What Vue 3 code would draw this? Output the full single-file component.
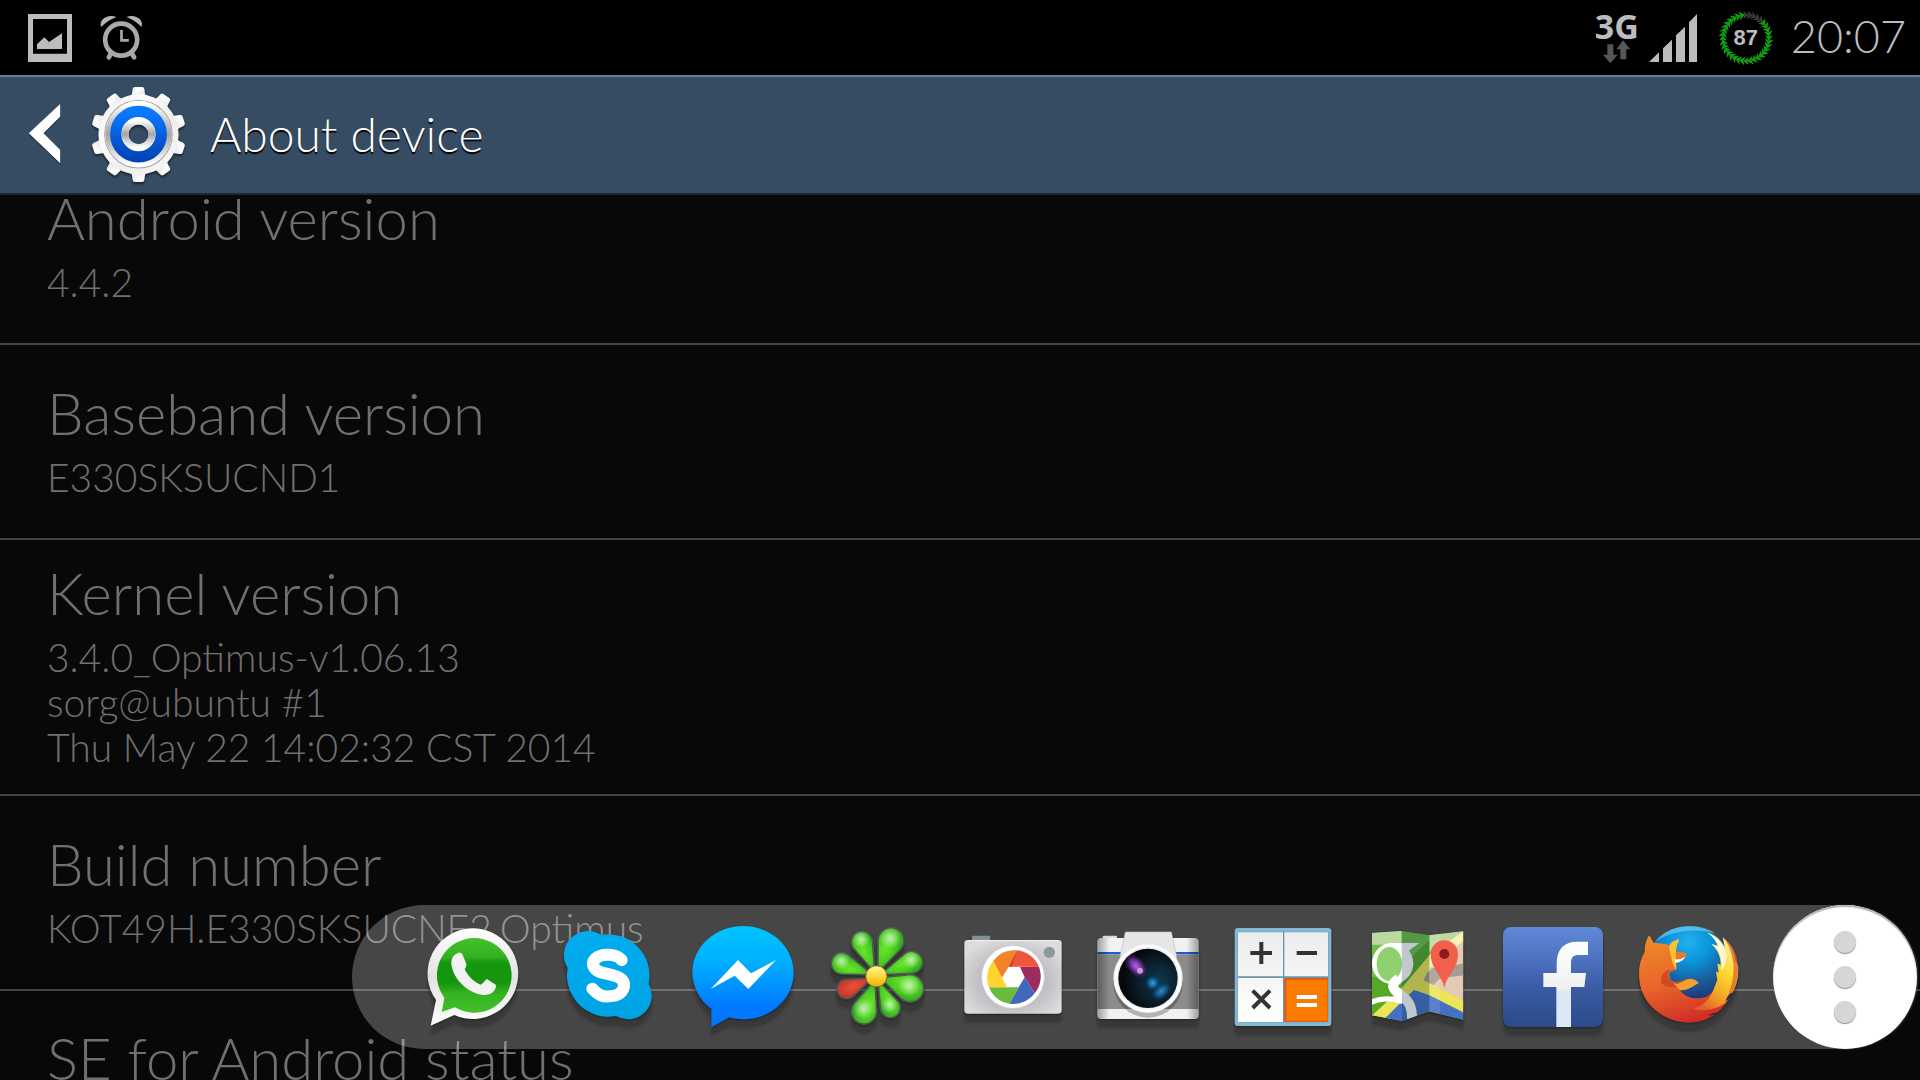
<script setup>
const rows = [
  { title: 'Android version', lines: ['4.4.2'] },
  { title: 'Baseband version', lines: ['E330SKSUCND1'] },
  { title: 'Kernel version', lines: ['3.4.0_Optimus-v1.06.13', 'sorg@ubuntu #1', 'Thu May 22 14:02:32 CST 2014'] },
  { title: 'Build number', lines: ['KOT49H.E330SKSUCNE2.Optimus'] },
  { title: 'SE for Android status', lines: [] },
]

// Flower petals: round end centre and radius, all pointing at the flower's heart
const heart = { x: 619, y: 229 }
const petals = [
  { x: 576, y: 126, r: 32 },
  { x: 663, y: 122, r: 39 },
  { x: 725, y: 187, r: 33 },
  { x: 720, y: 265, r: 41 },
  { x: 661, y: 323, r: 30 },
  { x: 582, y: 334, r: 38 },
  { x: 530, y: 267, r: 29, red: true },
  { x: 516, y: 190, r: 32 },
].map((p) => {
  const dx = p.x - heart.x
  const dy = p.y - heart.y
  const d = Math.hypot(dx, dy)
  const a = Math.asin(p.r / d)
  const t = d * Math.cos(a)
  const tx = (t * Math.cos(a)).toFixed(1)
  const ty = (t * Math.sin(a)).toFixed(1)
  return {
    ...p,
    d: `M12 0L${tx} ${-ty}A${p.r} ${p.r} 0 1 1 ${tx} ${ty}Z`,
    angle: (Math.atan2(dy, dx) * 180) / Math.PI,
  }
})

// Battery ring: 36 arrow heads, the last few of them spent
const ticks = Array.from({ length: 36 }, (_, i) => ({ angle: i * 10, spent: i < 5 }))
</script>

<template>
  <div class="screen">
    <div class="status">
      <div class="group">
        <svg class="picture" viewBox="84 45 132 144" aria-hidden="true">
          <path fill="#bcbcbe" fill-rule="evenodd" d="M84 45H216V189H84ZM99 60V164H201V60Z" />
          <path fill="#bcbcbe" d="M111 150V136L133 115L147 129L186 103V150Z" />
        </svg>
        <svg class="alarm" viewBox="301 48 128 138" aria-hidden="true">
          <g fill="none" stroke="#a9a9a9" stroke-linecap="round">
            <circle cx="364" cy="122" r="48" stroke-width="14" />
            <path stroke-width="8" stroke-linecap="butt" d="M365 93V124H387" />
            <path stroke-width="14" d="M332 165L327 175M397 165L403 175" />
          </g>
          <path fill="#b4b4b4" d="M304 84C296 62 322 44 350 54C334 60 320 68 304 84ZM425 84C433 62 407 44 380 54C396 60 410 68 425 84Z" />
        </svg>
      </div>
      <div class="group">
        <div class="network">
          <span>3G</span>
          <svg class="arrows" viewBox="80 123 84 70" aria-hidden="true">
            <path fill="#565656" d="M93 135H111V166H124L102 192L80 166H93ZM132 180V150H120L140 123L162 150H150V180Z" />
          </svg>
        </div>
        <svg class="signal" viewBox="207 42 144 144" aria-hidden="true">
          <path fill="#bcbcbe" d="M207 186L237 157V186ZM249 186V145L276 119V186ZM288 186V106L315 80V186ZM327 186V67L351 42V186Z" />
        </svg>
        <div class="battery">
          <svg viewBox="0 0 54 54" aria-hidden="true">
            <path
              v-for="t in ticks"
              :key="t.angle"
              d="M25 1L29 4L25 7L26 4Z"
              :fill="t.spent ? '#3a3a3a' : '#12a012'"
              :stroke="t.spent ? '#3a3a3a' : '#12a012'"
              :transform="`rotate(${t.angle} 27 27)`"
            />
          </svg>
          <span>87</span>
        </div>
        <time class="clock">20:07</time>
      </div>
    </div>

    <header class="bar">
      <button class="back" aria-label="Back">
        <svg class="chevron" viewBox="84 313 98 186" aria-hidden="true">
          <path fill="#0b1a28" opacity=".6" d="M180 320V359L130 408L180 458V498L86 408Z" />
          <path fill="#fff" d="M180 316V354L130 404L180 454V494L86 404Z" />
        </svg>
        <svg class="gear" viewBox="270 258 290 290" aria-hidden="true">
          <defs>
            <linearGradient id="steel" x1="0" y1="0" x2="1" y2="1">
              <stop offset="0" stop-color="#e4e4e4" /><stop offset=".3" stop-color="#fff" />
              <stop offset=".6" stop-color="#ededed" /><stop offset="1" stop-color="#fafafa" />
            </linearGradient>
            <linearGradient id="groove" x1="0" y1="0" x2="0" y2="1">
              <stop offset="0" stop-color="#fff" /><stop offset=".5" stop-color="#a4a4a4" /><stop offset="1" stop-color="#fff" />
            </linearGradient>
            <linearGradient id="blue" x1="0" y1="0" x2="0" y2="1">
              <stop offset="0" stop-color="#0a7aff" /><stop offset="1" stop-color="#0046ba" />
            </linearGradient>
          </defs>
          <g fill="url(#steel)">
            <path
              v-for="n in 10"
              :key="n"
              d="M382 300C394 290 396 284 397 270Q398 261 404 261H426Q432 261 433 270C434 284 436 290 448 300Z"
              :transform="`rotate(${n * 36} 415 403)`"
            />
          </g>
          <path fill="url(#steel)" fill-rule="evenodd" d="M415 283A120 120 0 1 0 415 523A120 120 0 1 0 415 283ZM415 373A30 30 0 1 1 415 433A30 30 0 1 1 415 373Z" />
          <circle cx="415" cy="402" r="101" fill="none" stroke="#a2a2a2" stroke-width="3" />
          <circle cx="415" cy="402" r="91" fill="none" stroke="url(#groove)" stroke-width="16" />
          <circle cx="415" cy="402" r="68" fill="none" stroke="url(#blue)" stroke-width="34" />
          <circle cx="415" cy="402" r="40" fill="none" stroke="url(#groove)" stroke-width="20" />
        </svg>
      </button>
      <h1>About device</h1>
    </header>

    <main class="list">
      <section v-for="row in rows" :key="row.title" class="row">
        <h2>{{ row.title }}</h2>
        <p v-for="line in row.lines" :key="line">{{ line }}</p>
      </section>
    </main>

    <nav class="dock" aria-label="Quick launch">
      <button class="app" aria-label="WhatsApp">
        <svg viewBox="57 69 324 324">
          <defs>
            <linearGradient id="wa" x1="0" y1="0" x2="0" y2="1">
              <stop offset="0" stop-color="#42c22a" /><stop offset=".25" stop-color="#35b022" /><stop offset=".34" stop-color="#15960c" />
              <stop offset=".6" stop-color="#15960c" /><stop offset=".75" stop-color="#36b322" /><stop offset="1" stop-color="#44bf2a" />
            </linearGradient>
            <linearGradient id="waEdge" x1="0" y1="0" x2="0" y2="1">
              <stop offset="0" stop-color="#fff" /><stop offset=".5" stop-color="#e2e2e2" /><stop offset="1" stop-color="#fff" />
            </linearGradient>
          </defs>
          <path fill="url(#waEdge)" d="M92 377L108 300A136 136 0 1 1 163 345Z" />
          <path fill="url(#wa)" d="M125 336L133 293A112 112 0 1 1 165 322Z" />
          <path fill="#f2f2f2" d="M176 158C160 162 151 178 155 198C164 242 205 280 250 285C272 286 288 274 288 255L261 237C254 240 252 250 242 254C221 247 202 226 194 208C198 201 201 197 198 189L187 163Q184 157 176 158Z" />
        </svg>
      </button>
      <button class="app" aria-label="Skype">
        <svg viewBox="462 69 324 324">
          <defs>
            <linearGradient id="sky" x1="0" y1="0" x2="0" y2="1">
              <stop offset="0" stop-color="#00adef" /><stop offset="1" stop-color="#00a3e4" />
            </linearGradient>
          </defs>
          <path fill="url(#sky)" d="M603 105A72 72 0 0 0 503 204A124 124 0 0 0 648 348A71 71 0 0 0 746 252A124 124 0 0 0 603 105Z" />
          <path fill="none" stroke="#fff" stroke-width="36" stroke-linecap="round" d="M665 180C650 161 606 158 586 176C572 190 580 209 600 216C622 223 650 224 665 238C680 255 670 280 644 287C606 294 594 284 577 266" />
        </svg>
      </button>
      <button class="app" aria-label="Messenger">
        <svg viewBox="57 69 324 324">
          <defs>
            <linearGradient id="msg" x1="0" y1="0" x2="0" y2="1">
              <stop offset="0" stop-color="#00c4ff" /><stop offset=".35" stop-color="#00b0ff" /><stop offset=".8" stop-color="#0078ff" /><stop offset="1" stop-color="#0076ff" />
            </linearGradient>
          </defs>
          <path fill="url(#msg)" d="M124 382V327C90 300 67 262 67 218C67 141 135 78 219 78S371 141 371 218S303 358 219 358Q197 358 178 352Z" />
          <path fill="#fff" d="M122 267L204 180L243 220L318 180L235 267L194 227Z" />
        </svg>
      </button>
      <button class="app" aria-label="ICQ">
        <svg viewBox="462 69 324 324">
          <defs>
            <radialGradient id="leaf" cx=".55" cy=".4" r=".65">
              <stop offset="0" stop-color="#6ae62c" /><stop offset=".45" stop-color="#4fd022" /><stop offset="1" stop-color="#279f22" />
            </radialGradient>
            <radialGradient id="leafRed" cx=".55" cy=".5" r=".6">
              <stop offset="0" stop-color="#e8553c" /><stop offset="1" stop-color="#bf2a22" />
            </radialGradient>
            <radialGradient id="shine">
              <stop offset="0" stop-color="#d4f5c8" stop-opacity=".85" /><stop offset="1" stop-color="#d4f5c8" stop-opacity="0" />
            </radialGradient>
            <linearGradient id="bud" x1="0" y1="0" x2="0" y2="1">
              <stop offset="0" stop-color="#fff2a8" /><stop offset=".5" stop-color="#ffd83a" /><stop offset="1" stop-color="#f0ac10" />
            </linearGradient>
          </defs>
          <g v-for="p in petals" :key="p.x">
            <path
              :d="p.d"
              :fill="p.red ? 'url(#leafRed)' : 'url(#leaf)'"
              stroke="#4c5a4c"
              stroke-width="5"
              :transform="`translate(${heart.x} ${heart.y}) rotate(${p.angle})`"
            />
            <circle v-if="!p.red" :cx="p.x - 2" :cy="p.y - 8" :r="p.r * 0.8" fill="url(#shine)" />
          </g>
          <circle cx="619" cy="229" r="32" fill="url(#bud)" stroke="#7a6a20" stroke-width="3" />
        </svg>
      </button>
      <button class="app" aria-label="Camera">
        <svg viewBox="57 69 324 324">
          <defs>
            <radialGradient id="shell" cx=".5" cy=".55" r=".6">
              <stop offset="0" stop-color="#a8a8ac" /><stop offset=".65" stop-color="#c4c4c8" /><stop offset="1" stop-color="#dcdcdc" />
            </radialGradient>
          </defs>
          <rect x="96" y="107" width="55" height="20" rx="3" fill="#839095" />
          <rect x="73" y="120" width="292" height="221" rx="10" fill="url(#shell)" />
          <path stroke="#f4f4f4" stroke-width="3" d="M82 122H356" />
          <circle cx="328" cy="157" r="17" fill="#8b989d" />
          <circle cx="219" cy="231" r="94" fill="#fff" stroke="#d0d0d0" stroke-width="2" />
          <path fill="#f0563e" d="M231 151L206 200H240L297 201A80 80 0 0 0 231 151Z" />
          <path fill="#9b2c60" d="M297 201H240L254 232L284 280A80 80 0 0 0 297 201Z" />
          <path fill="#4267bd" d="M284 280L254 232L236 262L208 311A80 80 0 0 0 284 280Z" />
          <path fill="#67bb3d" d="M208 311L236 262H147A80 80 0 0 0 208 311Z" />
          <path fill="#ffd42c" d="M147 262H201L186 233L160 182A80 80 0 0 0 147 262Z" />
          <path fill="#f08427" d="M160 182L186 233L206 200L231 151A80 80 0 0 0 160 182Z" />
          <path fill="#c8432a" d="M231 151L206 200H216Z" />
        </svg>
      </button>
      <button class="app" aria-label="Camera FX">
        <svg viewBox="462 69 324 324">
          <defs>
            <linearGradient id="grip" x1="0" y1="0" x2="1" y2="0">
              <stop offset="0" stop-color="#000" stop-opacity=".35" /><stop offset=".12" stop-color="#000" stop-opacity="0" />
              <stop offset=".88" stop-color="#000" stop-opacity="0" /><stop offset="1" stop-color="#000" stop-opacity=".35" />
            </linearGradient>
            <radialGradient id="glass" cx=".68" cy=".55" r=".6">
              <stop offset="0" stop-color="#0d3a52" /><stop offset=".6" stop-color="#0a1c28" /><stop offset="1" stop-color="#060809" />
            </radialGradient>
            <radialGradient id="violet">
              <stop offset="0" stop-color="#b06ad8" /><stop offset=".5" stop-color="#7a34b0" stop-opacity=".9" /><stop offset="1" stop-color="#5a2090" stop-opacity="0" />
            </radialGradient>
            <radialGradient id="azure">
              <stop offset="0" stop-color="#35a5ee" /><stop offset=".5" stop-color="#1672b4" stop-opacity=".8" /><stop offset="1" stop-color="#0c4a78" stop-opacity="0" />
            </radialGradient>
          </defs>
          <rect x="488" y="107" width="43" height="14" rx="3" fill="#dcdcdc" />
          <rect x="472" y="114" width="304" height="243" rx="12" fill="#f0f1f3" />
          <rect x="472" y="156" width="304" height="7" fill="#1f5ccc" />
          <rect x="472" y="163" width="304" height="164" fill="#8c8c8c" />
          <path fill="#e6e6e6" d="M556 96H694L709 165V200H541V165Z" stroke="#c2c2c2" stroke-width="2" />
          <rect x="472" y="114" width="304" height="243" rx="12" fill="url(#grip)" />
          <circle cx="624" cy="249" r="104" fill="#000" opacity=".25" />
          <circle cx="624" cy="235" r="104" fill="#efefef" />
          <circle cx="624" cy="235" r="97" fill="none" stroke="#fff" stroke-width="6" />
          <circle cx="624" cy="235" r="89" fill="url(#glass)" />
          <ellipse cx="588" cy="198" rx="42" ry="26" fill="url(#violet)" transform="rotate(48 588 198)" />
          <circle cx="600" cy="212" r="9" fill="#e0b4d8" opacity=".8" />
          <circle cx="638" cy="249" r="22" fill="url(#azure)" />
          <ellipse cx="664" cy="274" rx="34" ry="22" fill="url(#azure)" opacity=".8" transform="rotate(-40 664 274)" />
        </svg>
      </button>
      <button class="app" aria-label="Calculator">
        <svg viewBox="57 69 324 324">
          <defs>
            <linearGradient id="key" x1="0" y1="0" x2="0" y2="1">
              <stop offset="0" stop-color="#ececee" /><stop offset="1" stop-color="#fff" />
            </linearGradient>
          </defs>
          <rect x="74" y="84" width="290" height="294" rx="10" fill="#82b8d6" />
          <rect x="83" y="95" width="272" height="272" rx="4" fill="#6d93a8" />
          <path fill="url(#key)" d="M84 97H219V229H84ZM223 97H354V229H223ZM84 234H219V366H84Z" />
          <path fill="#e05c10" d="M223 234H354V366H223Z" />
          <path fill="#fa7b00" d="M229 240H352V362H229Z" />
          <path fill="none" stroke="#333" stroke-width="12" d="M121 159H186M154 126V192M260 159H321M128 272L180 324M180 272L128 324" />
          <path fill="none" stroke="#fff" stroke-width="12" d="M260 291H321M260 315H321" />
        </svg>
      </button>
      <button class="app" aria-label="Maps">
        <svg viewBox="462 69 324 324">
          <clipPath id="sheet"><path d="M486 99L575 93L658 106L760 94V359L657 334L576 363L486 346Z" /></clipPath>
          <g clip-path="url(#sheet)">
            <rect x="486" y="90" width="280" height="280" fill="#6cc048" />
            <path fill="#bcd9a0" d="M486 90H575V134H486ZM658 90H766V130L700 190L658 150Z" />
            <path fill="#56a828" d="M486 230H560L600 262L486 350ZM658 120V175L575 262V200Z" />
            <path fill="#e4cbb4" d="M655 200L766 110V320L655 262Z" />
            <path fill="#a89c90" d="M635 245L665 205L766 190V225L690 235L655 270Z" />
            <path fill="#fbf2b8" d="M658 165L766 90V118L658 205Z" />
            <path fill="#ece556" d="M658 166V208L640 240L766 306V345L620 272L530 370L480 352L575 264Z" />
            <path fill="#4670c4" d="M612 270L657 285L766 340V370H510L560 320Z" />
            <ellipse cx="548" cy="190" rx="62" ry="62" fill="#fff" />
            <path fill="#fff" d="M540 129H628L596 152Z" />
            <ellipse cx="538" cy="192" rx="38" ry="51" fill="#8fd070" />
            <path fill="none" stroke="#fff" stroke-width="30" d="M566 236C540 254 546 268 574 286C600 304 608 326 606 370" />
            <path fill="none" stroke="#fff" stroke-width="16" d="M480 308C510 294 545 294 578 304" />
            <path fill="#0a2a40" opacity=".26" d="M575 90L658 106V334L576 370Z" />
            <path fill="#fff" opacity=".12" d="M658 100H690V350H658Z" />
          </g>
          <path fill="#f0604c" d="M703 264C697 226 662 206 662 162A41 41 0 0 1 744 162C744 206 709 226 703 264Z" />
          <circle cx="703" cy="162" r="15" fill="#8c1c1c" />
        </svg>
      </button>
      <button class="app" aria-label="Facebook">
        <svg viewBox="57 69 324 324">
          <defs>
            <linearGradient id="fb" x1="0" y1="0" x2="0" y2="1">
              <stop offset="0" stop-color="#6088d6" /><stop offset=".3" stop-color="#4f74c2" /><stop offset=".6" stop-color="#3a5ca4" /><stop offset="1" stop-color="#2a4a8a" />
            </linearGradient>
            <linearGradient id="fbMark" x1="0" y1="0" x2="0" y2="1">
              <stop offset="0" stop-color="#fff" /><stop offset=".55" stop-color="#f0f0f2" /><stop offset=".6" stop-color="#dde7f6" /><stop offset="1" stop-color="#dde7f6" />
            </linearGradient>
          </defs>
          <rect x="69" y="81" width="300" height="300" rx="24" fill="url(#fb)" />
          <path fill="url(#fbMark)" d="M229 381V261H190V219H230V190C230 148 252 125 290 125H324V165H296C280 165 273 172 273 190V219H318L313 261H273V381Z" />
        </svg>
      </button>
      <button class="app" aria-label="Firefox">
        <svg viewBox="462 69 324 324">
          <defs>
            <radialGradient id="globe" cx=".5" cy=".2" r=".85">
              <stop offset="0" stop-color="#22b2ee" /><stop offset=".3" stop-color="#0a94dc" /><stop offset=".6" stop-color="#1a5c9c" /><stop offset="1" stop-color="#262060" />
            </radialGradient>
            <linearGradient id="fur" x1=".2" y1="0" x2=".5" y2="1">
              <stop offset="0" stop-color="#f08a28" /><stop offset=".55" stop-color="#e8642a" /><stop offset="1" stop-color="#d02c26" />
            </linearGradient>
            <linearGradient id="tail" x1=".7" y1="0" x2=".3" y2="1">
              <stop offset="0" stop-color="#fdf4a0" /><stop offset=".45" stop-color="#fcd82e" /><stop offset=".8" stop-color="#f09a24" /><stop offset="1" stop-color="#e4602a" />
            </linearGradient>
          </defs>
          <ellipse cx="625" cy="198" rx="128" ry="120" fill="url(#globe)" />
          <path fill="#7fd0f4" opacity=".6" d="M524 126C556 88 600 76 640 79C668 80 692 90 706 100C650 84 580 88 524 126Z" />
          <path fill="url(#fur)" d="M508 106L521 128C540 130 560 130 572 138L598 118C590 132 586 144 588 154L620 160C618 176 606 184 588 188L590 210C570 210 562 220 572 240C592 256 608 236 632 236C644 238 652 242 656 250C640 256 628 272 600 272C622 296 650 300 680 290C712 270 724 240 716 200L770 186C776 240 756 290 728 322C700 354 664 368 626 368C560 366 500 326 482 262C474 226 474 190 494 156C494 138 498 118 508 106Z" />
          <path fill="#fcc030" d="M598 118C580 122 566 128 568 148L578 190L588 210C592 188 578 160 598 118Z" />
          <path fill="#fff" d="M584 178Q602 180 616 170Q608 186 586 188Z" />
          <path fill="#c43a24" d="M544 250C540 226 552 212 574 208C560 220 562 232 572 242C584 254 606 240 632 236C616 246 606 262 580 262Q556 262 544 250Z" opacity=".65" />
          <path fill="#f4a030" d="M580 250C600 256 612 238 632 236C644 238 652 242 656 250C640 256 628 272 600 270Z" />
          <path fill="url(#tail)" d="M682 98C708 106 724 122 734 142L728 112C752 132 764 156 766 182L774 198C778 236 764 282 734 310C706 330 676 334 640 326C668 318 690 300 700 270L712 240L708 214L716 218L712 190L722 196C722 170 714 150 694 132L714 138C708 122 698 108 682 98Z" />
          <path fill="#fff" opacity=".75" d="M682 98C712 110 732 134 740 164C738 190 732 206 724 212C728 180 722 152 694 132L714 138C708 122 698 108 682 98Z" />
          <path fill="#e4602a" d="M728 112C756 130 772 160 774 200C776 240 762 280 736 306C752 270 764 230 760 190C756 156 744 128 728 112Z" opacity=".75" />
          <path fill="#262060" d="M736 304Q742 286 758 276Q754 294 736 304ZM684 346Q698 338 714 336Q700 348 684 346Z" />
        </svg>
      </button>
      <button class="more" aria-label="More">
        <span class="dot"></span>
        <span class="dot"></span>
        <span class="dot"></span>
      </button>
    </nav>
  </div>
</template>

<style>
body {
  background: #080808;
}
</style>

<style scoped>
.screen {
  position: relative;
  display: flex;
  flex-direction: column;
  height: 100vh;
  overflow: hidden;
  background: #080808;
  color: #707070;
  font-family: Lato, 'Open Sans', sans-serif;
  font-weight: 300;
}

button {
  padding: 0;
  border: 0;
  background: none;
}

svg {
  display: block;
  overflow: visible;
}

.status {
  display: flex;
  flex: none;
  align-items: center;
  justify-content: space-between;
  height: 75px;
  padding: 0 14px 0 28px;
  background: #000;
  color: #bcbcbe;
}

.group {
  display: flex;
  align-items: center;
}

.picture {
  width: 44px;
  height: 48px;
  margin-right: 28px;
}

.alarm {
  width: 43px;
  height: 46px;
}

.network {
  display: flex;
  flex-direction: column;
  align-items: center;
  margin-right: 10px;
  font: 700 34px/28px 'Open Sans', sans-serif;
}

.arrows {
  width: 28px;
  height: 24px;
}

.signal {
  width: 48px;
  height: 48px;
  margin-right: 22px;
}

.battery {
  display: grid;
  place-items: center;
  width: 54px;
  height: 54px;
  margin-right: 18px;
  font: 700 22px/54px 'Liberation Sans', sans-serif;
}

.battery > * {
  grid-area: 1 / 1;
}

.clock {
  padding-bottom: 4px;
  font-size: 45px;
  line-height: 60px;
}

.bar {
  position: relative;
  display: flex;
  flex: none;
  align-items: center;
  box-sizing: border-box;
  height: 120px;
  padding: 0 28px 2px;
  border-top: 2px solid #5f7f9a;
  border-bottom: 2px solid #1a2a3a;
  background: #364c62;
}

.back {
  display: flex;
  align-items: center;
}

.chevron {
  width: 33px;
  height: 62px;
  margin-right: 29px;
}

.gear {
  width: 97px;
  height: 97px;
  filter: drop-shadow(0 2px 1px rgba(0, 0, 0, 0.5));
}

h1 {
  margin: 0 0 0 23px;
  color: #fff;
  font-size: 48px;
  font-weight: 300;
  line-height: 60px;
  text-shadow: 0 2px 1px #000;
}

.list {
  flex: 1;
  min-height: 0;
  overflow: hidden;
}

.row {
  display: flex;
  flex-direction: column;
  justify-content: center;
  box-sizing: border-box;
  min-height: 195px;
  padding: 11px 47px 24px;
  border-bottom: 2px solid #434343;
}

.row:first-child {
  margin-top: -45px;
}

.row:last-child {
  justify-content: flex-start;
  padding-top: 25px;
}

h2 {
  margin: 0;
  font-size: 58px;
  font-weight: 300;
  line-height: 84px;
}

p {
  margin: 0;
  font-size: 39px;
  line-height: 45px;
}

.dock {
  position: absolute;
  right: 3px;
  bottom: 31px;
  display: flex;
  align-items: center;
  gap: 27px;
  height: 144px;
  padding-left: 67px;
  border-radius: 72px;
  background: rgba(255, 255, 255, 0.25);
}

.app svg {
  width: 108px;
  height: 108px;
  filter: drop-shadow(0 1px 1px rgba(0, 0, 0, 0.35)) drop-shadow(0 9px 1px rgba(0, 0, 0, 0.2));
}

.more {
  display: flex;
  flex-direction: column;
  align-items: center;
  justify-content: center;
  gap: 13px;
  width: 144px;
  height: 144px;
  margin-left: 4px;
  border-radius: 50%;
  background: #fff;
  box-shadow: inset 0 2px 1px #b4b0b0, 1px 0 2px #444;
}

.dot {
  width: 22px;
  height: 22px;
  border-radius: 50%;
  background: #d6d6d6;
  box-shadow: 0 1px 1px #8c8c8c;
}
</style>
